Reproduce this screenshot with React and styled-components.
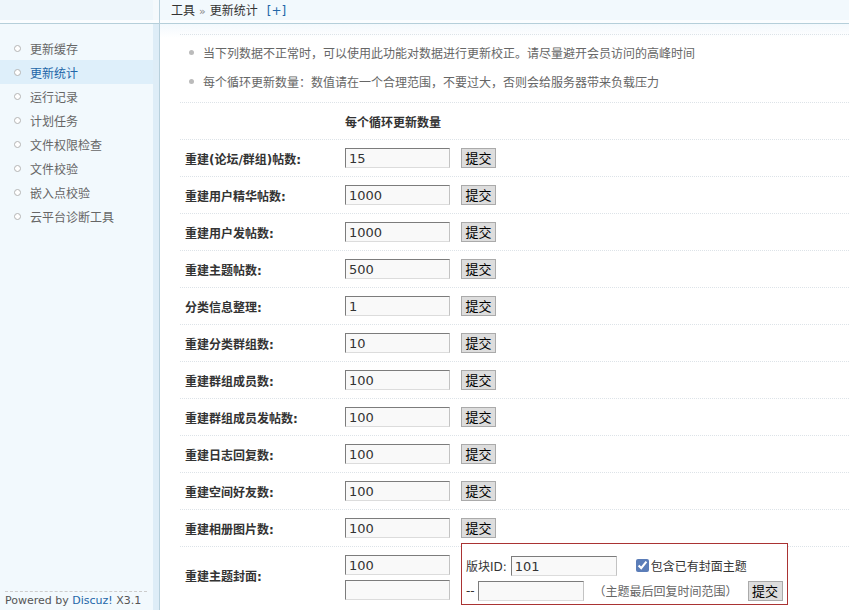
import React from 'react'
import styled, { createGlobalStyle } from 'styled-components'

const GlobalStyle = createGlobalStyle`
    html, body {
        margin: 0;
        padding: 0;
        background: #fff;
    }
    body {
        font: 12px Verdana, "DejaVu Sans", "Noto Sans CJK SC", sans-serif;
        color: #333;
    }
`

const Page = styled.div`
    display: flex;
    height: 610px;
    overflow: hidden;
`

const Side = styled.div`
    width: 159px;
    flex-shrink: 0;
    display: flex;
    flex-direction: column;
    border-right: 1px solid #b8d0dc;
    background: #f2f9fd;
`

const SideTop = styled.div`
    height: 24px;
    flex-shrink: 0;
    box-sizing: border-box;
    background: #eef6fb;
    border-bottom: 1px solid #b5cfda;
    box-shadow: inset 0 -3px 0 #fafdff, inset -6px 0 0 #f4f9fc;
`

const SideBody = styled.div`
    flex: 1;
    display: flex;
    flex-direction: column;
    box-shadow: inset -6px 0 0 #deedf7;
`

const Menu = styled.ul`
    list-style: none;
    margin: 0;
    padding: 12px 6px 0 0;
`

const MenuItem = styled.li`
    display: flex;
    align-items: center;
    height: 24px;
    padding-left: 14px;
    color: ${p => (p.$on ? '#2366a8' : '#666')};
    background: ${p => (p.$on ? '#deeffa' : 'transparent')};

    &::before {
        content: '';
        width: 5px;
        height: 5px;
        border: 1px solid #b4b4b4;
        border-radius: 50%;
        background: #fff;
        margin-right: 9px;
    }
`

const SideFoot = styled.div`
    margin: auto 12px 0 5px;
    border-top: 1px dashed #ccc;
    padding: 2px 0 3px;
    font: 11px Verdana, "DejaVu Sans", sans-serif;
    color: #555;
    white-space: nowrap;

    span {
        color: #2366a8;
    }
`

const Main = styled.div`
    flex: 1;
    display: flex;
    flex-direction: column;
    min-width: 0;
`

const Header = styled.div`
    height: 24px;
    flex-shrink: 0;
    box-sizing: border-box;
    padding: 1px 0 0 11px;
    background: #f2f9fd;
    border-bottom: 1px solid #b5cfda;
    box-shadow: inset 0 -3px 0 #fafdff;
    color: #333;
    white-space: nowrap;

    em {
        font-style: normal;
        color: #888;
        margin: 0 4px;
        font-size: 11px;
    }

    b {
        font-weight: normal;
        color: #2366a8;
        margin-left: 9px;
    }
`

const Content = styled.div`
    flex: 1;
    padding: 10px 0 0 20px;
    background: linear-gradient(#f3f9fd, #fff 14px);
`

const Tips = styled.ul`
    list-style: none;
    margin: 0;
    padding: 3px 0 6px;
    border-top: 1px dotted #dde3e8;
    border-bottom: 1px dotted #dde3e8;
`

const Tip = styled.li`
    display: flex;
    align-items: center;
    height: 29px;
    padding-left: 9px;
    color: #666;
    white-space: nowrap;

    &::before {
        content: '';
        width: 5px;
        height: 5px;
        border-radius: 50%;
        background: #bbb;
        margin-right: 9px;
    }
`

const Row = styled.div`
    display: flex;
    align-items: ${p => (p.$top ? 'flex-start' : 'center')};
    height: ${p => p.$h || 36}px;
    flex-shrink: 0;
    border-bottom: 1px dotted #dde3e8;
    padding-top: ${p => (p.$top ? 8 : 0)}px;
    box-sizing: content-box;
`

const Label = styled.div`
    width: 160px;
    padding-left: 5px;
    flex-shrink: 0;
    font-weight: bold;
    color: #333;
    white-space: nowrap;
    line-height: ${p => (p.$tall ? '45px' : 'normal')};
`

const HeadCell = styled.div`
    font-weight: bold;
    color: #333;
`

const Field = styled.div`
    display: flex;
    align-items: center;
    gap: 11px;
`

const Stack = styled.div`
    display: flex;
    flex-direction: column;
    gap: 5px;
    margin-right: 11px;
`

const Input = styled.input`
    width: ${p => p.$w || 105}px;
    height: 20px;
    box-sizing: border-box;
    padding: 1px 3px 0;
    border: 1px solid;
    border-color: #7c7c7c #c3c3c3 #dcdcdc #7c7c7c;
    background: #f9f9f9;
    font: 13px Verdana, "DejaVu Sans", sans-serif;
    color: #333;
    outline: none;
`

const Button = styled.button`
    width: 35px;
    height: 20px;
    padding: 0;
    border: 1px solid;
    border-color: #f2f2f2 #777 #777 #f2f2f2;
    outline: 1px solid #aaa;
    outline-offset: -1px;
    background: #ddd;
    font: 13px "Noto Sans CJK SC", sans-serif;
    color: #000;
    line-height: 18px;
`

const Box = styled.div`
    width: 327px;
    box-sizing: border-box;
    margin-top: -12px;
    padding: 11px 0 3px 4px;
    border: 1px solid #a33;
    background: #fff;
    display: flex;
    flex-direction: column;
    gap: 4px;
`

const BoxLine = styled.div`
    display: flex;
    align-items: center;
    height: 21px;
    white-space: nowrap;
    color: #333;
`

const Check = styled.label`
    display: flex;
    align-items: center;
    margin-left: 19px;
    color: #333;

    input {
        width: 13px;
        height: 13px;
        margin: 0 2px 0 0;
        accent-color: #5b7db8;
    }
`

const Hint = styled.span`
    color: #666;
    margin: 0 10px 0 9px;
`

const menu = ['更新缓存', '更新统计', '运行记录', '计划任务', '文件权限检查', '文件校验', '嵌入点校验', '云平台诊断工具']

const rows = [
    ['重建(论坛/群组)帖数:', '15'],
    ['重建用户精华帖数:', '1000'],
    ['重建用户发帖数:', '1000'],
    ['重建主题帖数:', '500'],
    ['分类信息整理:', '1'],
    ['重建分类群组数:', '10'],
    ['重建群组成员数:', '100'],
    ['重建群组成员发帖数:', '100'],
    ['重建日志回复数:', '100'],
    ['重建空间好友数:', '100'],
    ['重建相册图片数:', '100'],
]

const App = () => {
    return (
        <Page>
            <GlobalStyle />
            <Side>
                <SideTop />
                <SideBody>
                    <Menu>
                        {menu.map(m => (
                            <MenuItem key={m} $on={m === '更新统计'}>{m}</MenuItem>
                        ))}
                    </Menu>
                    <SideFoot>Powered by <span>Discuz!</span> X3.1</SideFoot>
                </SideBody>
            </Side>
            <Main>
                <Header>
                    工具<em>»</em>更新统计<b>[+]</b>
                </Header>
                <Content>
                    <Tips>
                        <Tip>当下列数据不正常时，可以使用此功能对数据进行更新校正。请尽量避开会员访问的高峰时间</Tip>
                        <Tip>每个循环更新数量：数值请在一个合理范围，不要过大，否则会给服务器带来负载压力</Tip>
                    </Tips>
                    <Row $h={36}>
                        <Label />
                        <HeadCell>每个循环更新数量</HeadCell>
                    </Row>
                    {rows.map(([label, value]) => (
                        <Row key={label}>
                            <Label>{label}</Label>
                            <Field>
                                <Input defaultValue={value} />
                                <Button>提交</Button>
                            </Field>
                        </Row>
                    ))}
                    <Row $top $h={60}>
                        <Label $tall>重建主题封面:</Label>
                        <Stack>
                            <Input defaultValue="100" />
                            <Input />
                        </Stack>
                        <Box>
                            <BoxLine>
                                版块ID:&nbsp;<Input $w={106} defaultValue="101" />
                                <Check>
                                    <input type="checkbox" defaultChecked />
                                    包含已有封面主题
                                </Check>
                            </BoxLine>
                            <BoxLine>
                                --&nbsp;<Input $w={106} />
                                <Hint>（主题最后回复时间范围）</Hint>
                                <Button>提交</Button>
                            </BoxLine>
                        </Box>
                    </Row>
                </Content>
            </Main>
        </Page>
    )
}

export default App
